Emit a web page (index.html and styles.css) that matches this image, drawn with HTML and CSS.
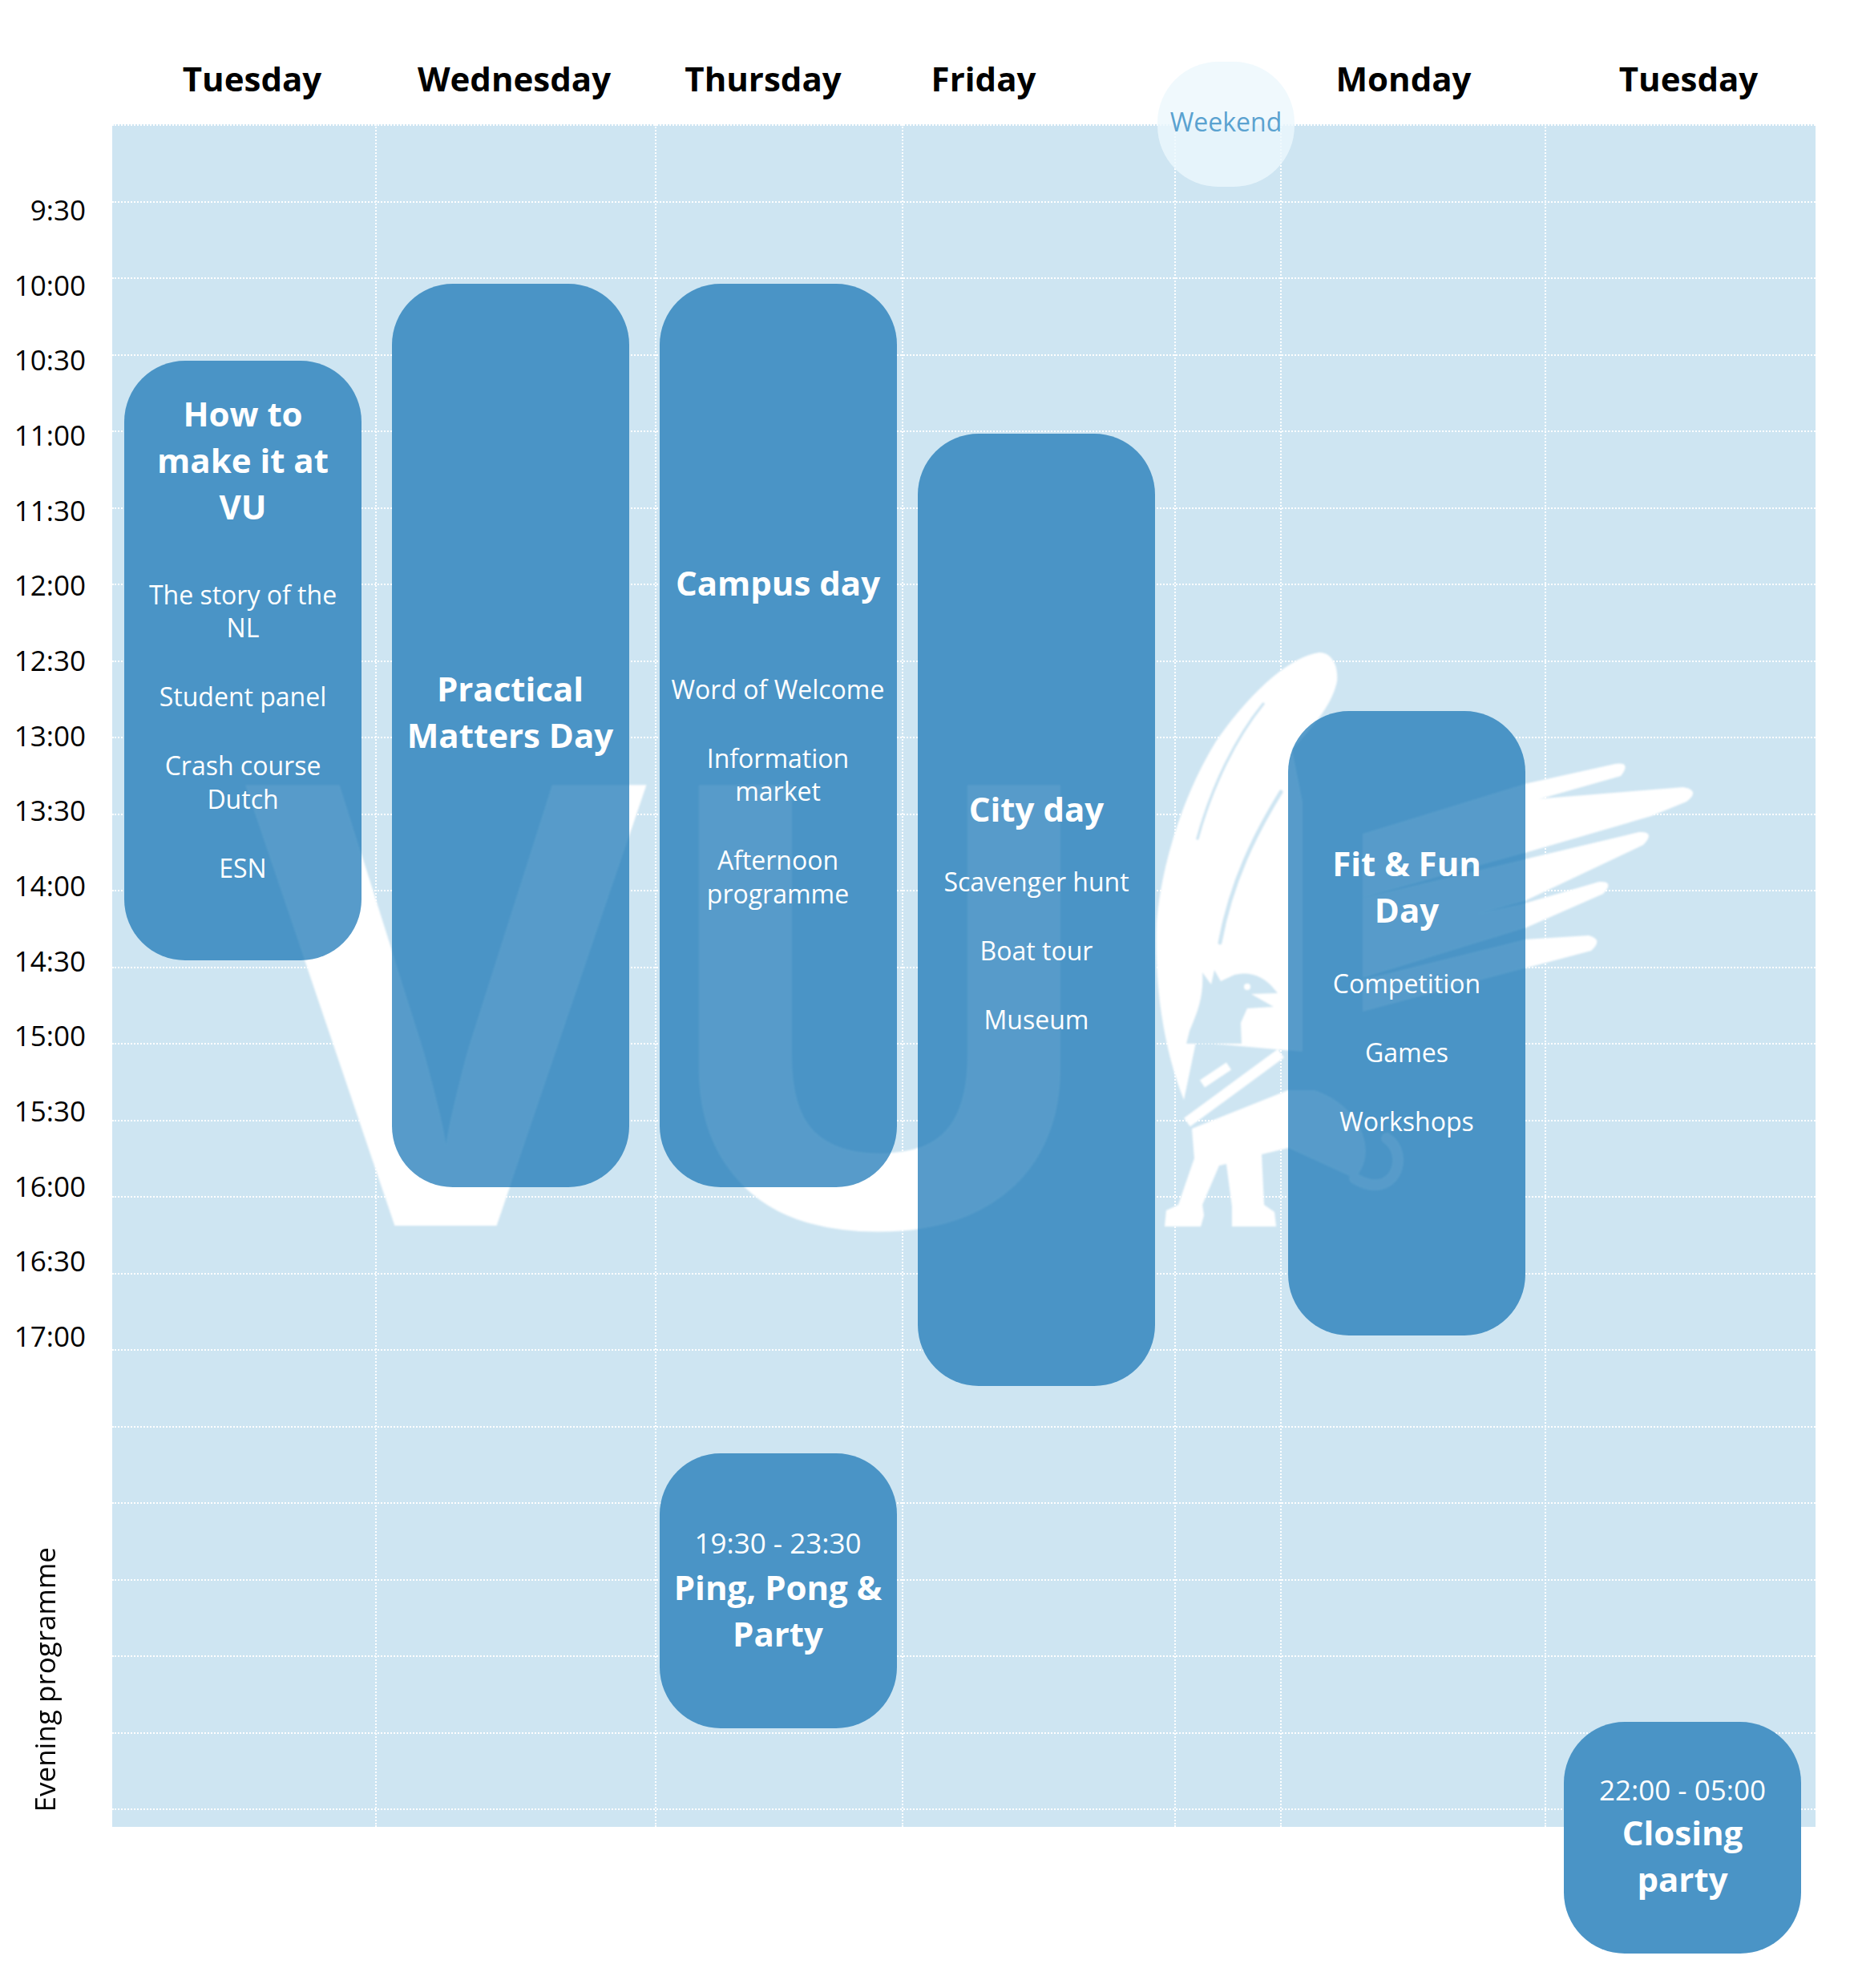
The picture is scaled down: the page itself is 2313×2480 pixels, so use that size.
FILE: index.html
```html
<!DOCTYPE html>
<html lang="en">
<head>
<meta charset="utf-8">
<title>Introduction week schedule</title>
<link rel="stylesheet" href="styles.css">
</head>
<body>
<div class="page">
  <header class="days">
    <div class="day day-1">Tuesday</div>
    <div class="day day-2">Wednesday</div>
    <div class="day day-3">Thursday</div>
    <div class="day day-4">Friday</div>
    <div class="day day-gap"></div>
    <div class="day day-5">Monday</div>
    <div class="day day-6">Tuesday</div>
  </header>

  <div class="weekend">Weekend</div>

  <aside class="times">
    <div class="time">9:30</div>
    <div class="time">10:00</div>
    <div class="time">10:30</div>
    <div class="time">11:00</div>
    <div class="time">11:30</div>
    <div class="time">12:00</div>
    <div class="time">12:30</div>
    <div class="time">13:00</div>
    <div class="time">13:30</div>
    <div class="time">14:00</div>
    <div class="time">14:30</div>
    <div class="time">15:00</div>
    <div class="time">15:30</div>
    <div class="time">16:00</div>
    <div class="time">16:30</div>
    <div class="time">17:00</div>
    <div class="evening"><span>Evening programme</span></div>
  </aside>

  <main class="board">
    <div class="hlines">
      <div class="hl"></div><div class="hl"></div><div class="hl"></div><div class="hl"></div>
      <div class="hl"></div><div class="hl"></div><div class="hl"></div><div class="hl"></div>
      <div class="hl"></div><div class="hl"></div><div class="hl"></div><div class="hl"></div>
      <div class="hl"></div><div class="hl"></div><div class="hl"></div><div class="hl"></div>
      <div class="hl"></div><div class="hl"></div><div class="hl"></div><div class="hl"></div>
      <div class="hl"></div><div class="hl"></div><div class="hl hl-last"></div>
    </div>
    <div class="vlines">
      <div class="vl c1"></div><div class="vl c2"></div><div class="vl c3"></div><div class="vl c4"></div>
      <div class="vl c5"></div><div class="vl c6"></div><div class="vl c7"></div>
    </div>

    <svg class="mark" viewBox="140 155 2125 2124" aria-hidden="true">
      <defs>
        <filter id="soft" x="-5%" y="-5%" width="110%" height="110%">
          <feGaussianBlur stdDeviation="1.3"/>
        </filter>
      </defs>
      <g id="vu-mark" filter="url(#soft)">
        <text class="vu-text" x="306" y="1529">VU</text>
        <g class="griffin">
          <!-- big wing -->
          <path d="M1646,814 C1612,818 1562,860 1517,925 C1480,985 1450,1070 1443,1150 C1440,1230 1452,1310 1477,1372 L1492,1300 L1625,1312 L1625,1000 L1612,935 C1635,910 1662,880 1668,850 C1670,828 1660,814 1646,814 Z"/>
          <!-- right feathers -->
          <path d="M1700,1040 L1902,978 L2015,953 Q2036,950 2022,968 L1902,1002 L1700,1080 Z"/>
          <path d="M1700,1060 L1902,998 L2100,982 Q2122,986 2104,1000 L2060,1018 L1902,1064 L1700,1120 Z"/>
          <path d="M1700,1120 L1902,1072 L2045,1038 Q2066,1037 2050,1054 L1902,1124 L1700,1180 Z"/>
          <path d="M1700,1170 L1902,1127 L1995,1100 Q2015,1099 2000,1115 L1902,1158 L1700,1220 Z"/>
          <path d="M1700,1222 L1902,1172 L1982,1167 Q2001,1172 1985,1186 L1902,1208 L1700,1262 Z"/>
          <!-- haunches and legs -->
          <path d="M1487,1408 L1607,1360 L1640,1360 C1700,1380 1720,1440 1690,1470 L1607,1432 L1574,1440 L1577,1503 L1590,1512 L1592,1530 L1537,1530 L1537,1505 L1530,1452 L1521,1454 L1500,1503 L1502,1516 L1498,1530 L1453,1530 L1455,1510 L1470,1503 L1490,1445 Z"/>
        </g>
        <!-- head and neck, cut out of the wing -->
        <path class="griffin-cut" d="M1500,1213 L1511,1228 L1515,1210 L1523,1224 L1540,1216 C1556,1212 1576,1214 1594,1239 L1561,1240 L1589,1256 L1556,1258 L1548,1276 L1549,1302 L1480,1302 L1484,1286 C1492,1266 1502,1246 1500,1213 Z"/>
        <circle class="griffin-eye" cx="1556" cy="1231" r="4"/>
        <path class="wing-gap" d="M1598,988 C1566,1040 1536,1100 1522,1176"/>
        <path class="wing-gap thin" d="M1576,878 C1542,920 1512,980 1494,1046"/>
        <!-- raised forelegs -->
        <path class="griffin-line" d="M1481,1400 L1598,1314"/>
        <path class="griffin-line short" d="M1500,1352 L1533,1330"/>
        <path class="griffin-line tail" d="M1690,1470 C1740,1500 1760,1440 1730,1420"/>
      </g>
    </svg>

    <div class="events">
      <div class="col c1">
        <article class="ev ev-tue">
          <div class="ev-title">How to<br>make it at<br>VU</div>
          <div class="ev-items">
            <div class="ev-item">The story of the<br>NL</div>
            <div class="ev-item">Student panel</div>
            <div class="ev-item">Crash course<br>Dutch</div>
            <div class="ev-item">ESN</div>
          </div>
        </article>
      </div>
      <div class="col c2">
        <article class="ev ev-wed">
          <div class="ev-title">Practical<br>Matters Day</div>
        </article>
      </div>
      <div class="col c3">
        <article class="ev ev-campus">
          <div class="ev-title">Campus day</div>
          <div class="ev-items">
            <div class="ev-item">Word of Welcome</div>
            <div class="ev-item">Information<br>market</div>
            <div class="ev-item">Afternoon<br>programme</div>
          </div>
        </article>
        <article class="ev ev-ping">
          <div class="ev-when">19:30 - 23:30</div>
          <div class="ev-title">Ping, Pong &amp;<br>Party</div>
        </article>
      </div>
      <div class="col c4">
        <article class="ev ev-city">
          <div class="ev-title">City day</div>
          <div class="ev-items">
            <div class="ev-item">Scavenger hunt</div>
            <div class="ev-item">Boat tour</div>
            <div class="ev-item">Museum</div>
          </div>
        </article>
      </div>
      <div class="col c5"></div>
      <div class="col c6">
        <article class="ev ev-fit">
          <div class="ev-title">Fit &amp; Fun<br>Day</div>
          <div class="ev-items">
            <div class="ev-item">Competition</div>
            <div class="ev-item">Games</div>
            <div class="ev-item">Workshops</div>
          </div>
        </article>
      </div>
      <div class="col c7">
        <article class="ev ev-closing">
          <div class="ev-when">22:00 - 05:00</div>
          <div class="ev-title">Closing<br>party</div>
        </article>
      </div>
    </div>

    <svg class="mark mark-over" viewBox="140 155 2125 2124" aria-hidden="true">
      <use href="#vu-mark"/>
    </svg>
  </main>
</div>
</body>
</html>
```

FILE: styles.css
```css
* { box-sizing: border-box; }

html, body {
  margin: 0;
  background: #ffffff;
}

body {
  font-family: "Open Sans", "Noto Sans", "Liberation Sans", sans-serif;
  color: #000000;
}

.page {
  position: relative;
  width: 2313px;
  height: 2480px;
  display: grid;
  grid-template-columns: 140px 2125px;
  grid-template-rows: 155px 2124px 1fr;
}

/* ---------- day headers ---------- */
.days {
  grid-column: 2;
  grid-row: 1;
  display: flex;
  padding-top: 68.7px;
}
.day {
  flex: none;
  text-align: center;
  font-weight: 700;
  font-size: 42px;
  line-height: 58px;
  white-space: nowrap;
}
.day-1 { width: 349px; }
.day-2 { width: 305px; }
.day-3 { width: 316px; }
.day-4 { width: 234px; }
.day-gap { width: 253px; }
.day-5 { width: 308px; }
.day-6 { width: 403px; }

/* ---------- weekend bubble ---------- */
.weekend {
  position: absolute;
  left: 1444px;
  top: 76.5px;
  width: 171px;
  height: 156px;
  border-radius: 76px;
  background: rgba(236, 247, 253, 0.8);
  z-index: 5;
  text-align: center;
  padding-top: 53px;
  font-size: 32px;
  line-height: 44px;
  color: #5aa2d0;
}

/* ---------- time axis ---------- */
.times {
  grid-column: 1;
  grid-row: 2;
  display: flex;
  flex-direction: column;
  padding-top: 59.85px;
}
.time {
  flex: none;
  height: 93.7px;
  line-height: 93.7px;
  text-align: right;
  padding-right: 33px;
  font-size: 35px;
}
.evening {
  display: flex;
  align-items: flex-start;
  margin-top: 215.7px;
  padding-left: 31.6px;
}
.evening span {
  writing-mode: vertical-rl;
  text-orientation: sideways;
  transform: rotate(180deg);
  font-size: 35px;
  line-height: normal;
  white-space: nowrap;
}

/* ---------- board ---------- */
.board {
  grid-column: 2;
  grid-row: 2;
  position: relative;
  background: #cee5f2;
}
.hlines {
  display: flex;
  flex-direction: column;
  height: 100%;
}
.hl {
  flex: none;
  height: 95.5px;
  border-top: 2px dotted #ffffff;
}
.hl-last { flex: 1 1 auto; }

.vlines {
  position: absolute;
  inset: 0;
  display: flex;
}
.vl {
  flex: none;
  height: 100%;
  border-left: 2px dotted #ffffff;
}
.vl.c1 { border-left: 0; }

.c1 { width: 327.5px; }
.c2 { width: 349px; }
.c3 { width: 308.5px; }
.c4 { width: 340px; }
.c5 { width: 132px; }
.c6 { width: 329.5px; }
.c7 { width: 338.5px; }

/* ---------- watermark ---------- */
.mark {
  position: absolute;
  left: 0;
  top: 0;
  width: 2125px;
  height: 2124px;
  overflow: visible;
  pointer-events: none;
}
.mark-over {
  opacity: 0.07;
  z-index: 3;
}
.vu-text {
  font-family: "Open Sans", "Noto Sans", sans-serif;
  font-weight: 700;
  font-size: 770px;
  fill: #ffffff;
}
.griffin { fill: #ffffff; }
.griffin-cut { fill: #cee5f2; }
.griffin-eye { fill: #ffffff; }
.griffin-line {
  fill: none;
  stroke: #ffffff;
  stroke-width: 13;
  stroke-linecap: butt;
}
.griffin-line.short { stroke-width: 11; }
.griffin-line.tail { stroke-width: 14; stroke-linecap: round; }
.wing-gap {
  fill: none;
  stroke: #cee5f2;
  stroke-width: 5;
  stroke-linecap: round;
}
.wing-gap.thin { stroke-width: 3.5; }

/* ---------- events ---------- */
.events {
  position: absolute;
  inset: 0;
  display: flex;
  z-index: 2;
}
.col {
  flex: none;
  display: flex;
  flex-direction: column;
  align-items: flex-start;
}
.ev {
  flex: none;
  width: 296px;
  background: #4a94c6;
  border-radius: 76px;
  color: #ffffff;
  display: flex;
  flex-direction: column;
  align-items: center;
  text-align: center;
  padding-left: 6px;
  padding-right: 6px;
}
.ev-title {
  font-weight: 700;
  font-size: 42px;
  line-height: 58px;
  white-space: nowrap;
}
.ev-items {
  display: flex;
  flex-direction: column;
  gap: 44.4px;
}
.ev-item {
  font-size: 32px;
  line-height: 41.6px;
  white-space: nowrap;
}
.ev-when {
  font-size: 35px;
  line-height: 46px;
  white-space: nowrap;
}

.ev-tue { margin: 295px 0 0 15px; height: 748px; padding-top: 36.5px; }
.ev-tue .ev-title { margin-bottom: 60.2px; }

.ev-wed { margin: 199px 0 0 21px; height: 1127px; padding-top: 475.7px; }

.ev-campus { margin: 199px 0 0 6px; height: 1127px; padding-top: 344.3px; }
.ev-campus .ev-title { margin-bottom: 82.5px; }

.ev-ping { margin: 331.6px 0 0 6px; height: 343.4px; padding-top: 89.3px; }
.ev-ping .ev-when { margin-bottom: 3.3px; }

.ev-city { margin: 386px 0 0 20px; height: 1188px; padding-top: 438.7px; }
.ev-city .ev-title { margin-bottom: 41.4px; }

.ev-fit { margin: 732px 0 0 10px; height: 779px; padding-top: 160.7px; }
.ev-fit .ev-title { margin-bottom: 42px; }

.ev-closing { margin: 1993px 0 0 24.5px; height: 289px; padding-top: 61.9px; }
.ev-closing .ev-when { margin-bottom: 1px; }
```
